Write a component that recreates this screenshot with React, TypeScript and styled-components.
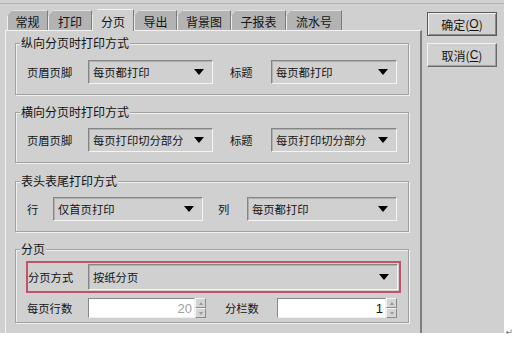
import React from 'react';
import styled, {createGlobalStyle} from "styled-components";

const Global = createGlobalStyle`
    body {
        margin: 0;
        background: #fff;
        font-family: "Noto Sans CJK SC", "Noto Sans", sans-serif;
        font-size: 11.3px;
        color: #141414;
    }
`

const tabs = [
    {title: '常规', width: 41},
    {title: '打印', width: 44},
    {title: '分页', width: 42},
    {title: '导出', width: 43},
    {title: '背景图', width: 54},
    {title: '子报表', width: 55},
    {title: '流水号', width: 56},
]

const Arrow = () => (
    <svg width="10" height="6" viewBox="0 0 10 6">
        <polygon points="0,0 10,0 5,6" fill="#000"/>
    </svg>
)

type ComboPropsType = {
    value: string
    width?: number
}

const Combo = (props: ComboPropsType) => {
    return (
        <StyledCombo $width={props.width}>
            <span>{props.value}</span>
            <Arrow/>
        </StyledCombo>
    );
};

type NumberFieldPropsType = {
    value: string
    width: number
    disabled?: boolean
}

const NumberField = (props: NumberFieldPropsType) => {
    return (
        <StyledNumber $width={props.width}>
            <NumberInput $disabled={props.disabled}>{props.value}</NumberInput>
            <Spinner>
                <SpinButton>
                    <svg width="4" height="3" viewBox="0 0 4 3"><polygon points="0,3 4,3 2,0" fill="#999"/></svg>
                </SpinButton>
                <SpinButton>
                    <svg width="4" height="3" viewBox="0 0 4 3"><polygon points="0,0 4,0 2,3" fill="#999"/></svg>
                </SpinButton>
            </Spinner>
        </StyledNumber>
    );
};

export default function App() {
    return (
        <Page>
            <Global/>
            <Window>
                <Frame>
                    <LeftSide>
                        <TabStrip>
                            {tabs.map(t => (
                                <Tab key={t.title} $width={t.width} $active={t.title === '分页'}>{t.title}</Tab>
                            ))}
                        </TabStrip>
                        <Panel>
                            <Group $padTop={16}>
                                <Legend>纵向分页时打印方式</Legend>
                                <Row>
                                    <Label $width={61}>页眉页脚</Label>
                                    <Combo value="每页都打印" width={125}/>
                                    <Label $width={41} $gap={17}>标题</Label>
                                    <Combo value="每页都打印" width={126}/>
                                </Row>
                            </Group>
                            <Group $padTop={15} $gap={17}>
                                <Legend>横向分页时打印方式</Legend>
                                <Row>
                                    <Label $width={61}>页眉页脚</Label>
                                    <Combo value="每页打印切分部分" width={125}/>
                                    <Label $width={41} $gap={17}>标题</Label>
                                    <Combo value="每页打印切分部分" width={126}/>
                                </Row>
                            </Group>
                            <Group $padTop={15} $gap={18}>
                                <Legend>表头表尾打印方式</Legend>
                                <Row>
                                    <Label $width={26}>行</Label>
                                    <Combo value="仅首页打印" width={150}/>
                                    <Label $width={29} $gap={15}>列</Label>
                                    <Combo value="每页都打印" width={150}/>
                                </Row>
                            </Group>
                            <Group $padTop={11} $padBottom={4} $gap={17}>
                                <Legend>分页</Legend>
                                <Highlight>
                                    <Label $width={60}>分页方式</Label>
                                    <Combo value="按纸分页"/>
                                </Highlight>
                                <FieldRow>
                                    <Label $width={61}>每页行数</Label>
                                    <NumberField value="20" width={118} disabled/>
                                    <Label $width={52} $gap={19}>分栏数</Label>
                                    <NumberField value="1" width={120}/>
                                </FieldRow>
                            </Group>
                        </Panel>
                    </LeftSide>
                    <ButtonColumn>
                        <Button $default>确定(<u>O</u>)</Button>
                        <Button>取消(<u>C</u>)</Button>
                    </ButtonColumn>
                </Frame>
            </Window>
            <Mark>↵</Mark>
        </Page>
    );
}

const Page = styled.div`
    width: 513px;
    height: 340px;
    display: flex;
    align-items: flex-start;
`

const Window = styled.div`
    width: 505px;
    height: 333px;
    box-sizing: border-box;
    padding-top: 3px;
    background: #d0d0d0;
    display: flex;
    flex-direction: column;
`

const Frame = styled.div`
    flex: 1;
    display: flex;
    border-top: 1px solid #b6b6b6;
    padding: 5px 0 0 5px;
`

const LeftSide = styled.div`
    width: 417px;
    display: flex;
    flex-direction: column;
`

const TabStrip = styled.div`
    height: 21px;
    display: flex;
    align-items: flex-end;
    padding-left: 2px;
`

const Tab = styled.div<{ $width: number, $active?: boolean }>`
    position: relative;
    z-index: ${p => p.$active ? 2 : 1};
    width: ${p => p.$width}px;
    height: ${p => p.$active ? 22 : 20}px;
    margin-bottom: ${p => p.$active ? -1 : 0}px;
    box-sizing: border-box;
    display: flex;
    align-items: center;
    justify-content: center;
    padding-top: 1px;
    background: ${p => p.$active ? '#d0d0d0' : '#b3b3b3'};
    border-top: 1px solid ${p => p.$active ? '#f4f4f4' : '#e2e2e2'};
    border-right: 1px solid #7c7c7c;
    border-left: 1px solid #eeeeee;
    clip-path: polygon(6px 0, 100% 0, 100% 100%, 0 100%, 0 6px);
    font-size: 12px;
`

const Panel = styled.div`
    flex: 1;
    border-top: 1px solid #f2f2f2;
    border-left: 1px solid #f2f2f2;
    border-right: 2px solid #7e7e7e;
    padding: 12px 11px 0 9px;
`

const Group = styled.div<{ $padTop: number, $padBottom?: number, $gap?: number }>`
    position: relative;
    margin-top: ${p => p.$gap || 0}px;
    padding: ${p => p.$padTop}px 10px ${p => p.$padBottom ?? 10}px 11px;
    border: 1px solid #a2a2a2;
    box-shadow: inset 1px 1px 0 #f0f0f0, 1px 1px 0 #f0f0f0;
`

const Legend = styled.span`
    position: absolute;
    top: -9px;
    left: 4px;
    padding: 0 1px;
    line-height: 16px;
    background: #d0d0d0;
    font-size: 12px;
`

const Row = styled.div`
    height: 24px;
    display: flex;
    align-items: center;
`

const Label = styled.span<{ $width: number, $gap?: number }>`
    width: ${p => p.$width}px;
    margin-left: ${p => p.$gap || 0}px;
    flex-shrink: 0;
    white-space: nowrap;
`

const StyledCombo = styled.div<{ $width?: number }>`
    ${p => p.$width ? `width: ${p.$width}px;` : 'flex: 1;'}
    height: 100%;
    box-sizing: border-box;
    display: flex;
    align-items: center;
    justify-content: space-between;
    padding: 0 8px 0 4px;
    border: 1px solid;
    border-color: #858585 #f4f4f4 #f4f4f4 #858585;
    box-shadow: inset 1px 1px 0 #b0b0b0;
    background: #d0d0d0;
    white-space: nowrap;
`

const Highlight = styled.div`
    height: 32px;
    box-sizing: border-box;
    display: flex;
    align-items: center;
    margin: 0 -3px 0 -1px;
    padding: 1px 1px 1px 0;
    border: 2px solid #c4506b;
`

const FieldRow = styled.div`
    height: 20px;
    margin-top: 5px;
    display: flex;
    align-items: center;
`

const StyledNumber = styled.div<{ $width: number }>`
    width: ${p => p.$width}px;
    height: 100%;
    display: flex;
`

const NumberInput = styled.div<{ $disabled?: boolean }>`
    flex: 1;
    box-sizing: border-box;
    display: flex;
    align-items: center;
    justify-content: flex-end;
    padding-right: 2px;
    background: #fff;
    border: 1px solid;
    border-color: #888 #eee #eee #888;
    color: ${p => p.$disabled ? '#a0a0a0' : '#111'};
    font-family: "Liberation Sans", sans-serif;
    font-size: 13px;
`

const Spinner = styled.div`
    width: 11px;
    display: flex;
    flex-direction: column;
`

const SpinButton = styled.div`
    flex: 1;
    box-sizing: border-box;
    display: flex;
    align-items: center;
    justify-content: center;
    background: #d4d4d4;
    border: 1px solid;
    border-color: #f4f4f4 #8a8a8a #8a8a8a #f4f4f4;
`

const ButtonColumn = styled.div`
    display: flex;
    flex-direction: column;
    gap: 7px;
    padding: 3px 0 0 5px;
`

const Button = styled.div<{ $default?: boolean }>`
    width: 70px;
    height: 24px;
    box-sizing: border-box;
    display: flex;
    align-items: center;
    justify-content: center;
    border: 1px solid;
    border-color: ${p => p.$default ? '#5a5a5a' : '#f2f2f2 #6a6a6a #6a6a6a #f2f2f2'};
    box-shadow: ${p => p.$default
        ? 'inset 1px 1px 0 #f2f2f2, inset -1px -1px 0 #8a8a8a'
        : 'inset -1px -1px 0 #a0a0a0'};
    font-size: 12px;

    u {
        font-family: "Liberation Sans", sans-serif;
        text-underline-offset: 2px;
    }
`

const Mark = styled.span`
    align-self: flex-end;
    margin: 0 0 3px 1px;
    font-family: "DejaVu Sans", sans-serif;
    font-size: 9px;
    color: #777;
`
